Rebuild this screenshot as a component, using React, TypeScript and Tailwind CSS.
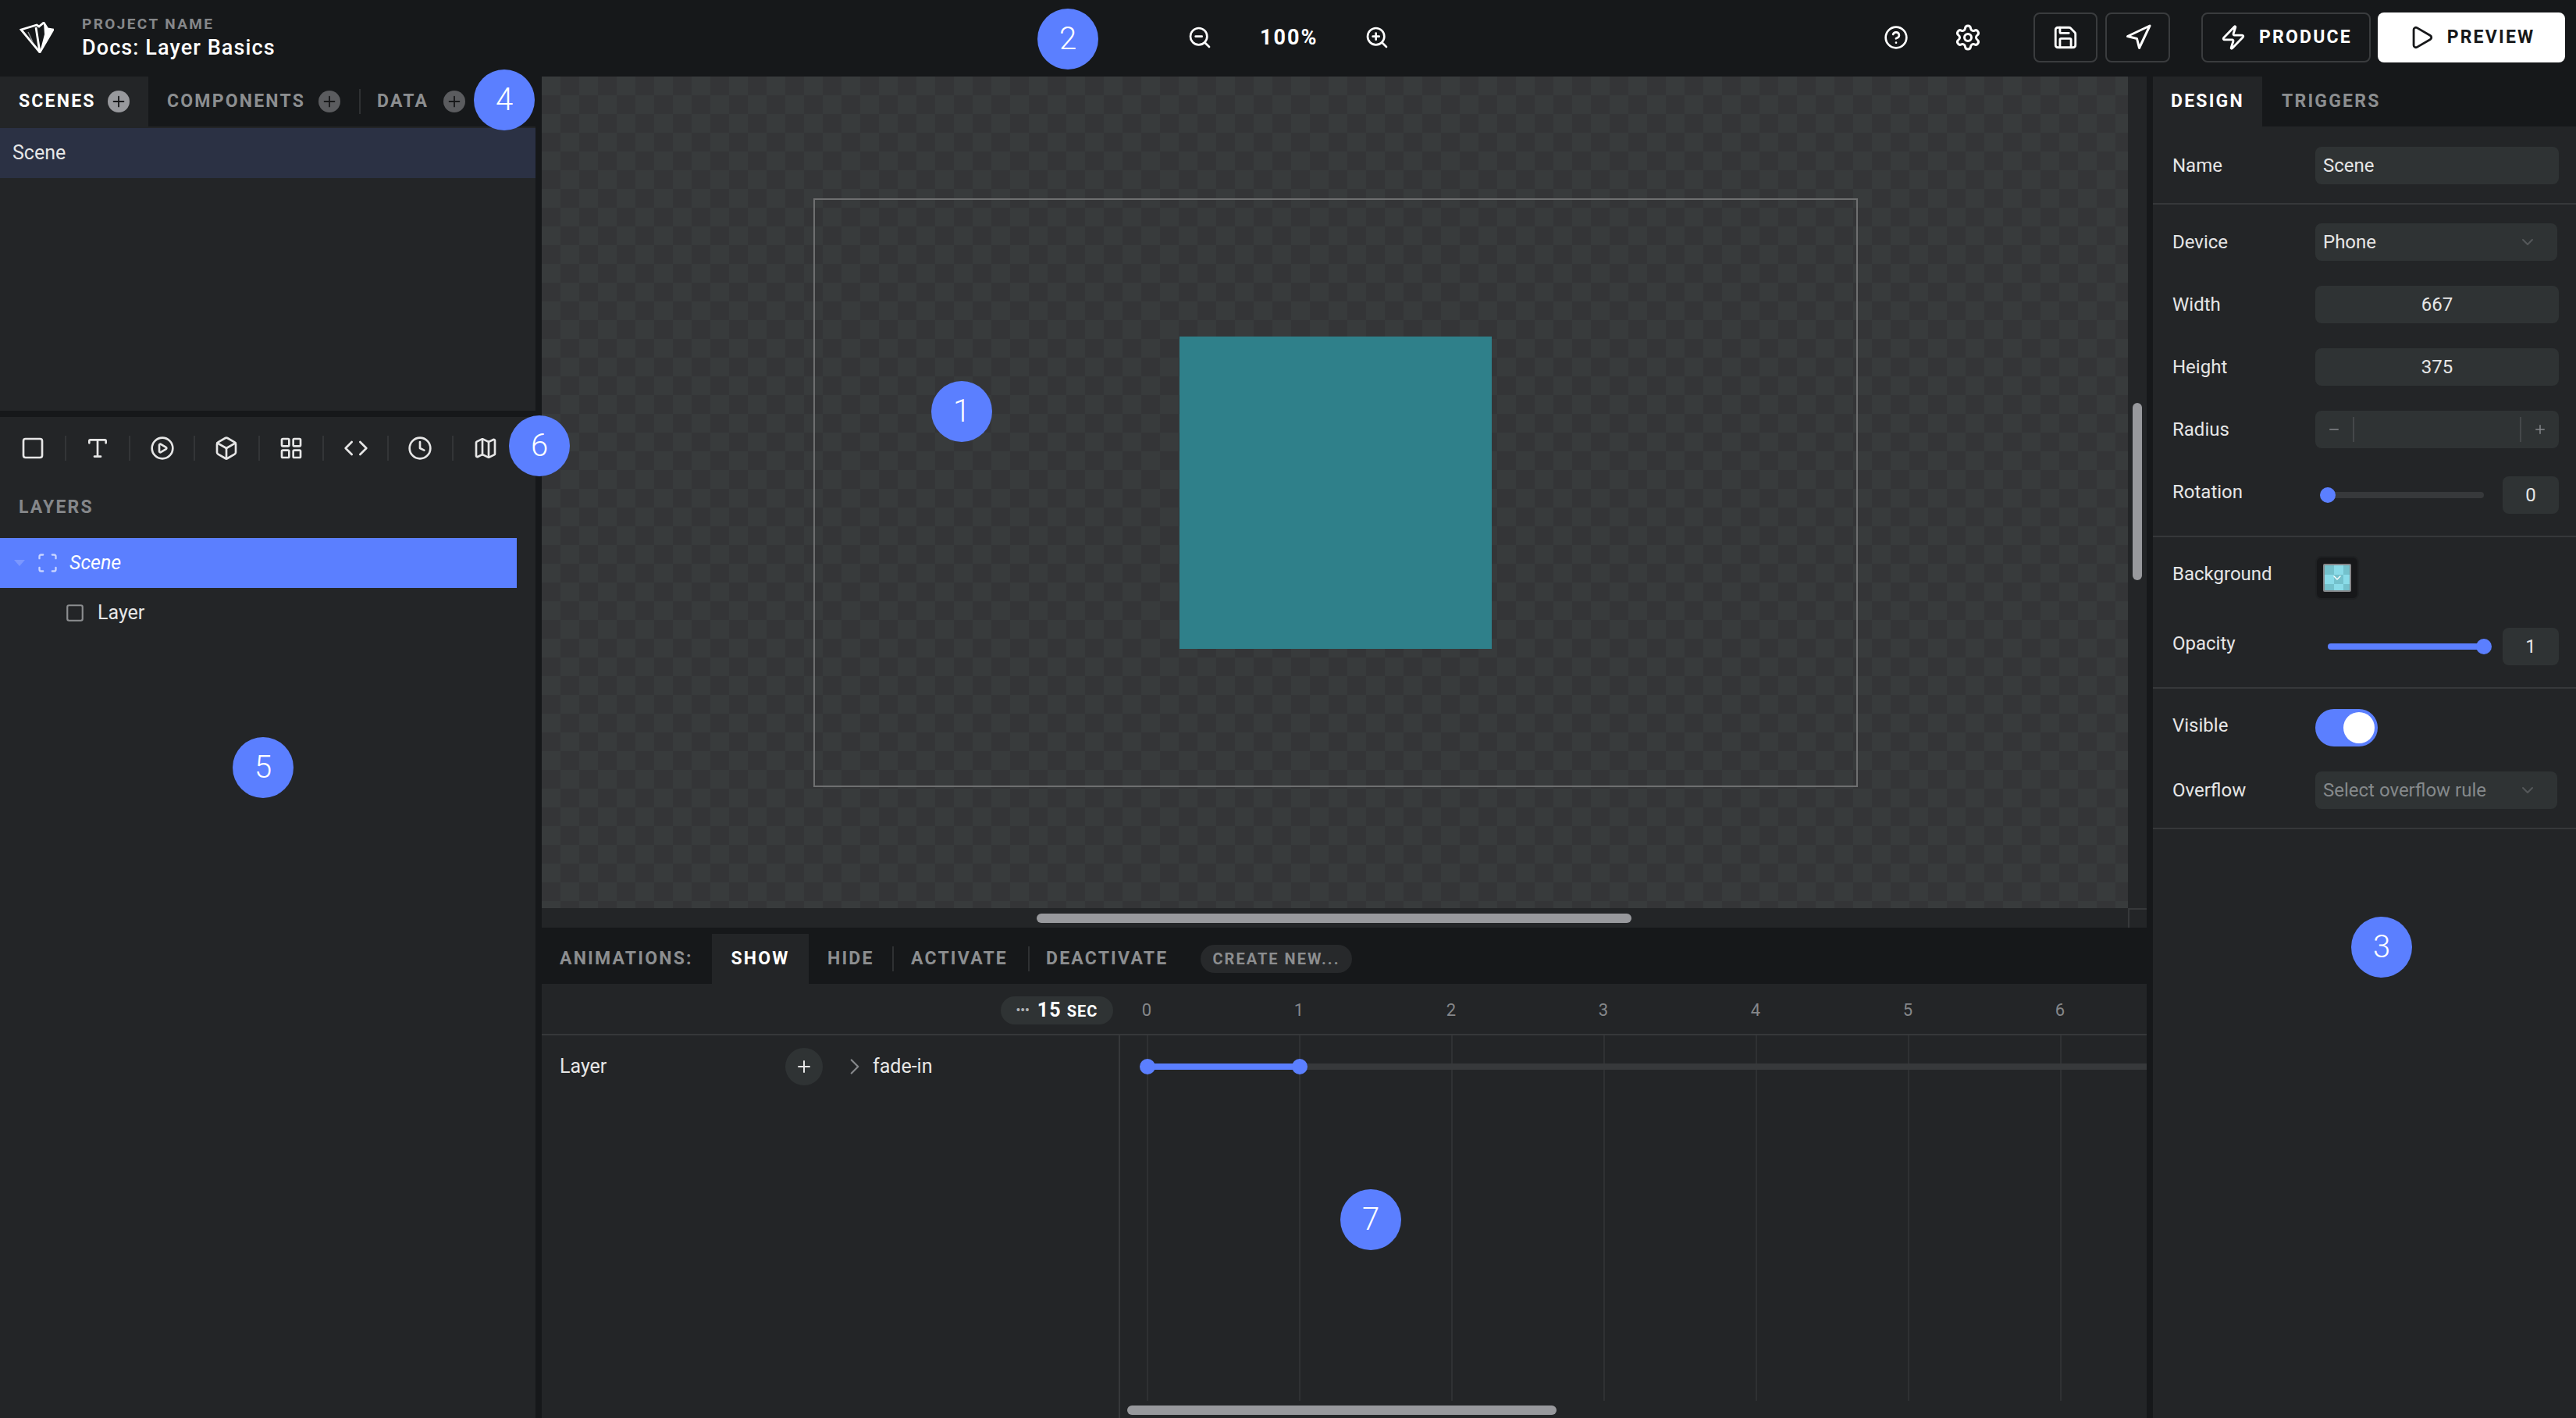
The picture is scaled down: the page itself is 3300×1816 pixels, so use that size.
import { Box, ChevronDown, ChevronRight, CircleHelp, CirclePlay, Clock, Code, LayoutGrid, Map, Minus, Navigation, Play, Plus, Save, Scan, Settings, Square, Type, Zap, ZoomIn, ZoomOut } from "lucide-react"

const toolIcons = [Square, Type, CirclePlay, Box, LayoutGrid, Code, Clock, Map]
const seconds = [0, 1, 2, 3, 4, 5, 6]

function Badge({ n, className }: { n: number; className: string }) {
  return (
    <div className={`absolute z-10 flex h-[78px] w-[78px] items-center justify-center rounded-full bg-[#5b7fff] text-[40px] font-light text-white ${className}`}>
      {n}
    </div>
  )
}

function Logo() {
  return (
    <svg viewBox="9 10 44 40" className="h-[40px] w-[44px]" fill="none" stroke="#fff" strokeWidth="2.8" strokeLinejoin="miter">
      <path d="M11 20 L31 14 L34 16 L40 11 L45 19 L52 20 L35 49 Z" />
      <path d="M20 23 L26 36" stroke="#8c8e90" strokeWidth="1.4" />
      <path d="M35 49 L30 17" />
      <path d="M40 11 L45 19 L52 20 L35 49 L41 26 Z" fill="#fff" stroke="none" />
    </svg>
  )
}

function TabPlus({ active }: { active?: boolean }) {
  return (
    <span className={`flex h-7 w-7 items-center justify-center rounded-full ${active ? "bg-[#98999d]" : "bg-[#5b5c5f]"}`}>
      <Plus size={22} strokeWidth={2} color="#17181a" />
    </span>
  )
}

function Field({ children, muted, className = "" }: { children?: React.ReactNode; muted?: boolean; className?: string }) {
  return <div className={`flex h-12 items-center rounded-lg bg-[#2f3334] text-[24px] ${muted ? "text-[#85898b]" : "text-[#e6e6e6]"} ${className}`}>{children}</div>
}

function Row({ label, labelClass = "", children }: { label: string; labelClass?: string; children: React.ReactNode }) {
  return (
    <div className="flex items-center">
      <div className={`w-[208px] pl-[25px] text-[24px] text-[#e6e6e6] ${labelClass}`}>{label}</div>
      {children}
    </div>
  )
}

function Header() {
  return (
    <div className="flex h-[98px] shrink-0 items-center pb-[2px]">
      <div className="flex w-[1521px] items-center pl-[25px]">
        <Logo />
        <div className="ml-[36px] flex flex-col">
          <span className="text-[19px] font-bold leading-[26px] tracking-[2.4px] text-[#85878a]">PROJECT NAME</span>
          <span className="text-[27px] font-medium leading-[34px] tracking-[1.1px] text-white">Docs: Layer Basics</span>
        </div>
      </div>
      <ZoomOut size={32} strokeWidth={2} color="#fff" />
      <span className="ml-[61px] w-[74px] text-[27px] font-bold tracking-[2px] text-white">100%</span>
      <span className="ml-[60px]"><ZoomIn size={32} strokeWidth={2} color="#fff" /></span>
      <div className="ml-auto flex items-center pr-[14px]">
        <CircleHelp size={32} strokeWidth={2} color="#fff" />
        <span className="ml-[58px]"><Settings size={36} strokeWidth={2} color="#fff" /></span>
        <div className="ml-[66px] flex h-16 w-[82px] items-center justify-center rounded-lg border-2 border-[#3a3c3e]"><Save size={34} strokeWidth={2} color="#fff" /></div>
        <div className="ml-[10px] flex h-16 w-[83px] items-center justify-center rounded-lg border-2 border-[#3a3c3e]"><Navigation size={36} strokeWidth={2} color="#fff" /></div>
        <div className="ml-[40px] flex h-16 w-[217px] items-center justify-center gap-[16px] rounded-lg border-2 border-[#3a3c3e]">
          <Zap size={34} strokeWidth={2} color="#fff" />
          <span className="text-[23px] font-bold tracking-[2.2px] text-white">PRODUCE</span>
        </div>
        <div className="ml-[9px] flex h-16 w-[240px] items-center justify-center gap-[16px] rounded-lg bg-white">
          <Play size={34} strokeWidth={2} color="#17181a" />
          <span className="text-[23px] font-bold tracking-[2.2px] text-[#17181a]">PREVIEW</span>
        </div>
      </div>
    </div>
  )
}

function LeftPanel() {
  return (
    <div className="flex w-[686px] shrink-0 flex-col bg-[#16181a]">
      <div className="h-[428px] bg-[#232527]">
        <div className="flex h-16 items-center bg-[#16181a] text-[23px] font-bold tracking-[2.2px]">
          <div className="flex h-16 w-[190px] items-center bg-[#232527] pl-[24px] text-white">
            <span className="w-[96px]">SCENES</span>
            <span className="ml-[18px]"><TabPlus active /></span>
          </div>
          <span className="ml-[24px] w-[176px] text-[#8c8e90]">COMPONENTS</span>
          <span className="ml-[18px]"><TabPlus /></span>
          <span className="ml-[24px] h-8 w-[2px] bg-[#2f3133]" />
          <span className="ml-[21px] w-[67px] text-[#8c8e90]">DATA</span>
          <span className="ml-[18px]"><TabPlus /></span>
        </div>
        <div className="mt-[2px] flex h-16 items-center bg-[#2b3144] pl-[16px] text-[25px] text-[#e6e6e6]">Scene</div>
      </div>
      <div className="mt-2 flex flex-1 flex-col bg-[#232527]">
        <div className="mt-[24px] flex h-8 items-center pl-[2px]">
          {toolIcons.map((Icon, i) => (
            <div key={i} className={`flex h-8 w-[82.7px] items-center justify-center ${i < 7 ? "border-r-2 border-[#333537]" : ""}`}>
              <Icon size={32} strokeWidth={2} color="#e6e6e6" />
            </div>
          ))}
        </div>
        <div className="mt-[43px] pl-[24px] text-[23px] font-bold tracking-[2.2px] text-[#85878a]">LAYERS</div>
        <div className="mt-[21px] flex h-16 w-[662px] items-center bg-[#5b7fff] text-[25px] italic text-white">
          <svg viewBox="0 0 14 8" className="ml-[18px] h-2 w-[14px]"><path d="M0 0 H14 L7 8 Z" fill="#7b97ff" /></svg>
          <Scan size={28} strokeWidth={2} color="#c8d4ff" className="ml-[15px]" />
          <span className="ml-[14px]">Scene</span>
        </div>
        <div className="flex h-16 items-center text-[25px] text-[#e6e6e6]">
          <Square size={26} strokeWidth={2} color="#8c8e90" className="ml-[83px]" />
          <span className="ml-[16px]">Layer</span>
        </div>
      </div>
    </div>
  )
}

function Canvas() {
  return (
    <div className="flex h-[1090px] shrink-0 flex-col bg-[#232527]">
      <div className="flex h-[1065px]">
        <div className="flex flex-1 items-center justify-center bg-[repeating-conic-gradient(#343537_0%_25%,#383b3c_0%_50%)] bg-[length:48px_48px] pl-[2px]">
          <div className="flex h-[754px] w-[1338px] items-center justify-center border-2 border-[#6e6f70]">
            <div className="h-[400px] w-[400px] bg-[#2f808a]" />
          </div>
        </div>
        <div className="w-6 pl-[6px] pt-[418px]">
          <div className="h-[227px] w-3 rounded-full bg-[#98999d]" />
        </div>
      </div>
      <div className="flex h-[25px]">
        <div className="flex-1 pl-[634px] pt-[7px]">
          <div className="h-3 w-[762px] rounded-full bg-[#98999d]" />
        </div>
        <div className="w-6 border-l-2 border-t-2 border-[#36383a]" />
      </div>
    </div>
  )
}

function Timeline() {
  return (
    <div className="flex flex-1 flex-col bg-[#232527]">
      <div className="flex h-[72px] shrink-0 items-end bg-[#16181a] text-[23px] font-bold tracking-[2.2px] text-[#8c8e90]">
        <div className="flex h-16 w-[218px] items-center pl-[23px]">ANIMATIONS:</div>
        <div className="flex h-16 w-[124px] items-center justify-center bg-[#232527] text-white">SHOW</div>
        <div className="flex h-16 items-center">
          <span className="ml-[24px] w-[59px]">HIDE</span>
          <span className="ml-[24px] h-8 w-[2px] bg-[#2f3133]" />
          <span className="ml-[22px] w-[124px]">ACTIVATE</span>
          <span className="ml-[26px] h-8 w-[2px] bg-[#2f3133]" />
          <span className="ml-[21px] w-[158px]">DEACTIVATE</span>
          <span className="ml-[40px] flex h-9 w-[194px] items-center justify-center rounded-full bg-[#27292b] text-[20px] tracking-[2px]">CREATE NEW...</span>
        </div>
      </div>
      <div className="flex h-[66px] shrink-0 border-b-2 border-[#36383a]">
        <div className="flex w-[739px] justify-end pr-[7px] pt-4">
          <div className="flex h-9 w-[144px] items-center justify-center gap-[10px] rounded-full bg-[#2f3334] font-bold text-white">
            <span className="text-[16px] text-[#b0b2b4]">•••</span>
            <span className="text-[25px] tracking-[1px]">15 <span className="text-[20px]">SEC</span></span>
          </div>
        </div>
        <div className="flex flex-1 gap-[195px] overflow-hidden pl-[36px] pt-[16px] text-[22px] leading-[36px] text-[#85878a]">
          {seconds.map((s) => (
            <div key={s} className="flex w-0 justify-center">{s}</div>
          ))}
        </div>
      </div>
      <div className="flex flex-1">
        <div className="flex h-20 w-[739px] items-start pl-[23px] pt-4 text-[25px] text-[#e6e6e6]">
          <span className="flex h-12 w-[289px] items-center">Layer</span>
          <span className="flex h-12 w-12 items-center justify-center rounded-full bg-[#2f3334]"><Plus size={24} strokeWidth={2} color="#e6e6e6" /></span>
          <span className="ml-[24px] flex h-12 items-center"><ChevronRight size={34} strokeWidth={1.6} color="#85878a" /></span>
          <span className="ml-[6px] flex h-12 items-center">fade-in</span>
        </div>
        <div className="relative flex flex-1 flex-col overflow-hidden border-l-2 border-[#36383a]">
          <div className="flex h-[468px] gap-[193px] pl-[34px]">
            {seconds.map((s) => (
              <div key={s} className="h-full w-[2px] bg-[#2f3133]" />
            ))}
          </div>
          <div className="ml-[9px] mt-[6px] h-3 w-[550px] rounded-full bg-[#98999d]" />
          <div className="absolute left-[34px] right-0 top-[36px] h-2 bg-[#37393b]" />
          <div className="absolute left-[34px] top-[36px] h-2 w-[195px] bg-[#5b7fff]" />
          <div className="absolute left-[25px] top-[30px] h-5 w-5 rounded-full bg-[#5b7fff]" />
          <div className="absolute left-[220px] top-[30px] h-5 w-5 rounded-full bg-[#5b7fff]" />
        </div>
      </div>
    </div>
  )
}

function RightPanel() {
  return (
    <div className="ml-2 flex w-[542px] shrink-0 flex-col bg-[#232527] text-[#e6e6e6]">
      <div className="flex h-16 items-center bg-[#16181a] text-[23px] font-bold tracking-[2.2px]">
        <div className="flex h-16 w-[140px] items-center bg-[#232527] pl-[23px] text-white">DESIGN</div>
        <span className="ml-[25px] text-[#8c8e90]">TRIGGERS</span>
      </div>
      <div className="border-b-2 border-[#36383a] pb-[24px] pt-[26px]">
        <Row label="Name"><Field className="w-[312px] pl-[10px]">Scene</Field></Row>
      </div>
      <div className="flex flex-col gap-8 border-b-2 border-[#36383a] pb-[28px] pt-[24px]">
        <Row label="Device">
          <Field className="w-[310px] justify-between pl-[10px] pr-[26px]">Phone<ChevronDown size={24} strokeWidth={2} color="#55585a" /></Field>
        </Row>
        <Row label="Width"><Field className="w-[312px] justify-center">667</Field></Row>
        <Row label="Height"><Field className="w-[312px] justify-center">375</Field></Row>
        <Row label="Radius">
          <Field muted className="w-[312px] justify-between">
            <span className="flex h-8 w-[50px] items-center justify-center border-r-2 border-[#45484a]"><Minus size={18} strokeWidth={2} color="#85878a" /></span>
            <span className="flex h-8 w-[50px] items-center justify-center border-l-2 border-[#45484a]"><Plus size={18} strokeWidth={2} color="#85878a" /></span>
          </Field>
        </Row>
        <div className="mt-[4px]">
          <Row label="Rotation" labelClass="pb-2">
            <div className="ml-[6px] flex items-center">
              <div className="relative h-2 w-[210px] rounded-full bg-[#37393b]">
                <div className="absolute left-0 top-[-6px] h-5 w-5 rounded-full bg-[#5b7fff]" />
              </div>
              <Field className="ml-[24px] w-[72px] justify-center">0</Field>
            </div>
          </Row>
        </div>
      </div>
      <div className="flex flex-col gap-[36px] border-b-2 border-[#36383a] pb-[28px] pt-[24px]">
        <Row label="Background" labelClass="pb-[10px]">
          <div className="flex h-14 w-14 items-center justify-center rounded-lg border-2 border-[#1f2123] bg-[#17181a]">
            <div className="flex h-9 w-9 items-center justify-center rounded-[2px] border-2 border-[#85878a] bg-[repeating-conic-gradient(#8adbe8_0%_25%,#74c1cc_0%_50%)] bg-[length:24px_24px]">
              <ChevronDown size={16} strokeWidth={2} color="#fff" />
            </div>
          </div>
        </Row>
        <Row label="Opacity" labelClass="pb-2">
          <div className="ml-[16px] flex items-center">
            <div className="relative h-2 w-[200px] rounded-full bg-[#5b7fff]">
              <div className="absolute right-[-10px] top-[-6px] h-5 w-5 rounded-full bg-[#5b7fff]" />
            </div>
            <Field className="ml-[24px] w-[72px] justify-center">1</Field>
          </div>
        </Row>
      </div>
      <div className="flex flex-col gap-8 border-b-2 border-[#36383a] pb-[24px] pt-[26px]">
        <Row label="Visible" labelClass="pb-[6px]">
          <div className="flex h-12 w-20 items-center justify-end rounded-full bg-[#5b7fff] pr-[4px]">
            <div className="h-10 w-10 rounded-full bg-white" />
          </div>
        </Row>
        <Row label="Overflow">
          <Field muted className="w-[310px] justify-between pl-[10px] pr-[26px]">Select overflow rule<ChevronDown size={24} strokeWidth={2} color="#55585a" /></Field>
        </Row>
      </div>
    </div>
  )
}

export default function App() {
  return (
    <div className="relative flex h-[1816px] w-[3300px] flex-col overflow-hidden bg-[#16181a] font-['Roboto',sans-serif]">
      <Header />
      <div className="flex min-h-0 flex-1">
        <LeftPanel />
        <div className="ml-2 flex w-[2056px] shrink-0 flex-col">
          <Canvas />
          <Timeline />
        </div>
        <RightPanel />
      </div>
      <Badge n={1} className="left-[1193px] top-[488px]" />
      <Badge n={2} className="left-[1329px] top-[11px]" />
      <Badge n={3} className="left-[3012px] top-[1174px]" />
      <Badge n={4} className="left-[607px] top-[89px]" />
      <Badge n={5} className="left-[298px] top-[944px]" />
      <Badge n={6} className="left-[652px] top-[532px]" />
      <Badge n={7} className="left-[1717px] top-[1523px]" />
    </div>
  )
}
